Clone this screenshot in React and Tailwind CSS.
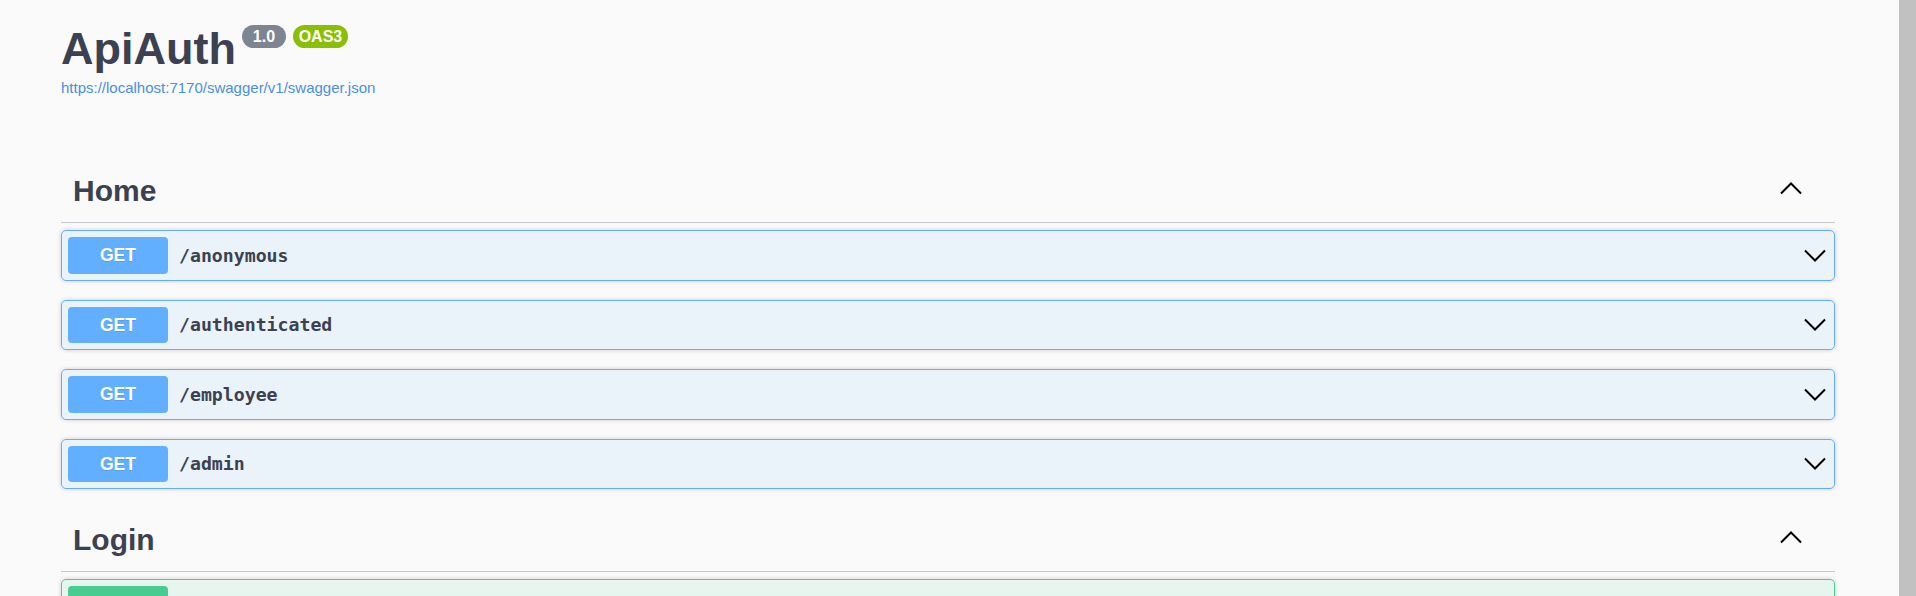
import React from "react";

const Chevron = ({ up }) => (
  <svg width="22" height="13" viewBox="0 0 22 13" className="block shrink-0">
    <polyline
      points={up ? "1,11.5 11,1.5 21,11.5" : "1,1.5 11,11.5 21,1.5"}
      fill="none"
      stroke="#000"
      strokeWidth="2"
    />
  </svg>
);

const Op = ({ path, post }) => (
  <div
    className={
      "flex items-center h-[50.75px] mb-[18.75px] border rounded-[5px] pl-[6px] pr-[8px] shadow-[0_0_4px_rgba(0,0,0,0.19)] " +
      (post
        ? "border-[#49cc90] bg-[rgba(73,204,144,0.1)]"
        : "border-[#61affe] bg-[rgba(97,175,254,0.1)]")
    }
  >
    <div
      className={
        "w-[100px] h-[36.5px] rounded-[4px] flex items-center justify-center text-white font-bold text-[17.5px] [text-shadow:0_1px_0_rgba(0,0,0,0.1)] shrink-0 " +
        (post ? "bg-[#49cc90]" : "bg-[#61affe]")
      }
      style={{ fontFamily: '"Liberation Sans", Arial, sans-serif' }}
    >
      {post ? "POST" : "GET"}
    </div>
    <div
      className="ml-[11px] flex-1 text-[18.2px] font-bold text-[#3b4151]"
      style={{ fontFamily: '"DejaVu Sans Mono", "Liberation Mono", monospace' }}
    >
      {path}
    </div>
    <Chevron />
  </div>
);

const TagHeader = ({ name }) => (
  <div className="flex items-center h-[64px] border-b border-[#c4c6cb] pl-[12px] pr-[33px]">
    <h3 className="flex-1 text-[30px] leading-[30px] font-bold text-[#3b4151]">{name}</h3>
    <div className="-mt-[4px]">
      <Chevron up />
    </div>
  </div>
);

export default function App() {
  return (
    <div
      className="flex w-full h-[596px] overflow-hidden bg-[#fafafa]"
      style={{ fontFamily: '"Liberation Sans", Arial, sans-serif' }}
    >
      <div className="flex-1 pl-[61px]">
        <div className="w-[1774px]">
          <div className="pt-[26px]">
            <div className="flex items-start">
              <h1 className="text-[45px] leading-[45px] font-bold text-[#3b4151]">ApiAuth</h1>
              <span className="ml-[6px] -mt-px w-[44px] h-[23px] rounded-full bg-[#7d8492] text-white font-bold text-[16px] leading-[23px] text-center">
                1.0
              </span>
              <span className="ml-[7px] -mt-px w-[55px] h-[23px] rounded-full bg-[#89bf04] text-white font-bold text-[16px] leading-[23px] text-center">
                OAS3
              </span>
            </div>
            <div className="mt-[9px] text-[15px] leading-[15px] text-[#4990e2]">
              https://localhost:7170/swagger/v1/swagger.json
            </div>
          </div>

          <div className="mt-[64px]">
            <TagHeader name="Home" />
            <div className="pt-[7px]">
              <Op path="/anonymous" />
              <Op path="/authenticated" />
              <Op path="/employee" />
              <Op path="/admin" />
            </div>
          </div>

          <div>
            <TagHeader name="Login" />
            <div className="pt-[7px]">
              <Op path="/login" post />
            </div>
          </div>
        </div>
      </div>
      <div className="w-[17px] shrink-0 bg-[#c1c1c1]" />
    </div>
  );
}
